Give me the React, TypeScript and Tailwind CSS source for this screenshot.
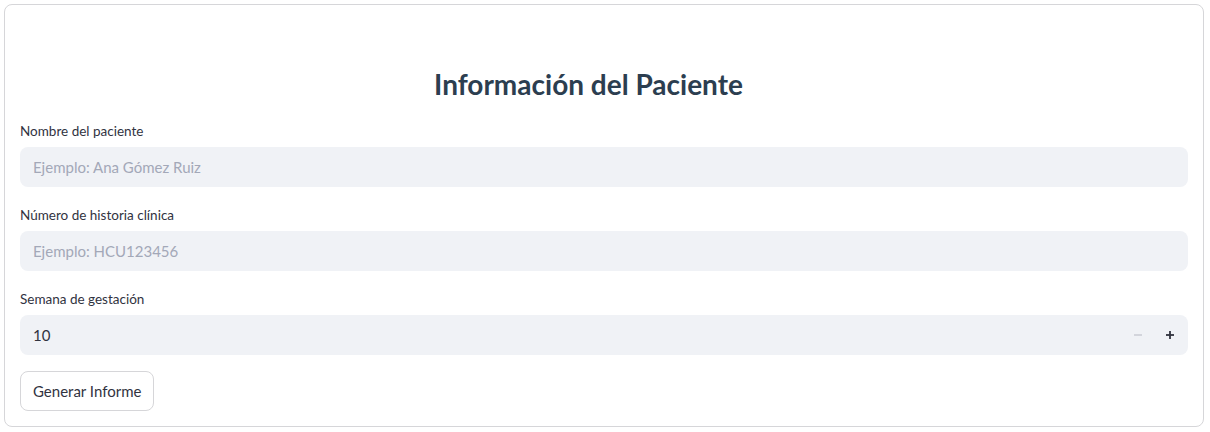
import React from 'react';

const Field: React.FC<{ label: string; children: React.ReactNode }> = ({ label, children }) => (
  <div className="flex flex-col">
    <label className="h-6 mb-1 pt-[1px] text-[13.5px] leading-[22px] text-[#31333f]">{label}</label>
    {children}
  </div>
);

export default function App() {
  return (
    <div className="w-[1210px] h-[432px] bg-white pt-1 pl-1" style={{ fontFamily: 'Lato, "Noto Sans", sans-serif' }}>
      <form
        className="w-[1200px] border border-[#d6d6d9] rounded-lg px-[15px] pt-[15px] pb-[15px] flex flex-col gap-4"
        onSubmit={(e) => e.preventDefault()}
      >
        <h3 className="pt-[46px] pb-[1px] pr-[31px] text-center text-[28px] leading-[36px] font-bold text-[#2c3e50]">
          Información del Paciente
        </h3>

        <Field label="Nombre del paciente">
          <input
            className="h-10 rounded-lg bg-[#f0f2f6] px-[13px] text-[15px] text-[#31333f] placeholder:text-[#a3a8b8] outline-none"
            placeholder="Ejemplo: Ana Gómez Ruiz"
          />
        </Field>

        <Field label="Número de historia clínica">
          <input
            className="h-10 rounded-lg bg-[#f0f2f6] px-[13px] text-[15px] text-[#31333f] placeholder:text-[#a3a8b8] outline-none"
            placeholder="Ejemplo: HCU123456"
          />
        </Field>

        <Field label="Semana de gestación">
          <div className="h-10 rounded-lg bg-[#f0f2f6] flex items-center pr-[2px]">
            <input
              className="flex-1 bg-transparent px-[13px] text-[15px] text-[#31333f] outline-none"
              defaultValue="10"
            />
            <button type="button" className="w-8 h-10 flex items-center justify-center text-[#c9ccd4]">
              <svg width="10" height="10" viewBox="0 0 10 10">
                <rect x="1" y="4.25" width="8" height="1.5" fill="currentColor" />
              </svg>
            </button>
            <button type="button" className="w-8 h-10 flex items-center justify-center text-[#31333f]">
              <svg width="10" height="10" viewBox="0 0 10 10">
                <rect x="1" y="4.1" width="8" height="1.8" fill="currentColor" />
                <rect x="4.1" y="1" width="1.8" height="8" fill="currentColor" />
              </svg>
            </button>
          </div>
        </Field>

        <div>
          <button
            type="submit"
            className="h-10 px-3 rounded-lg border border-[#d6d6d9] bg-white text-[15px] text-[#31333f]"
          >
            Generar Informe
          </button>
        </div>
      </form>
    </div>
  );
}
